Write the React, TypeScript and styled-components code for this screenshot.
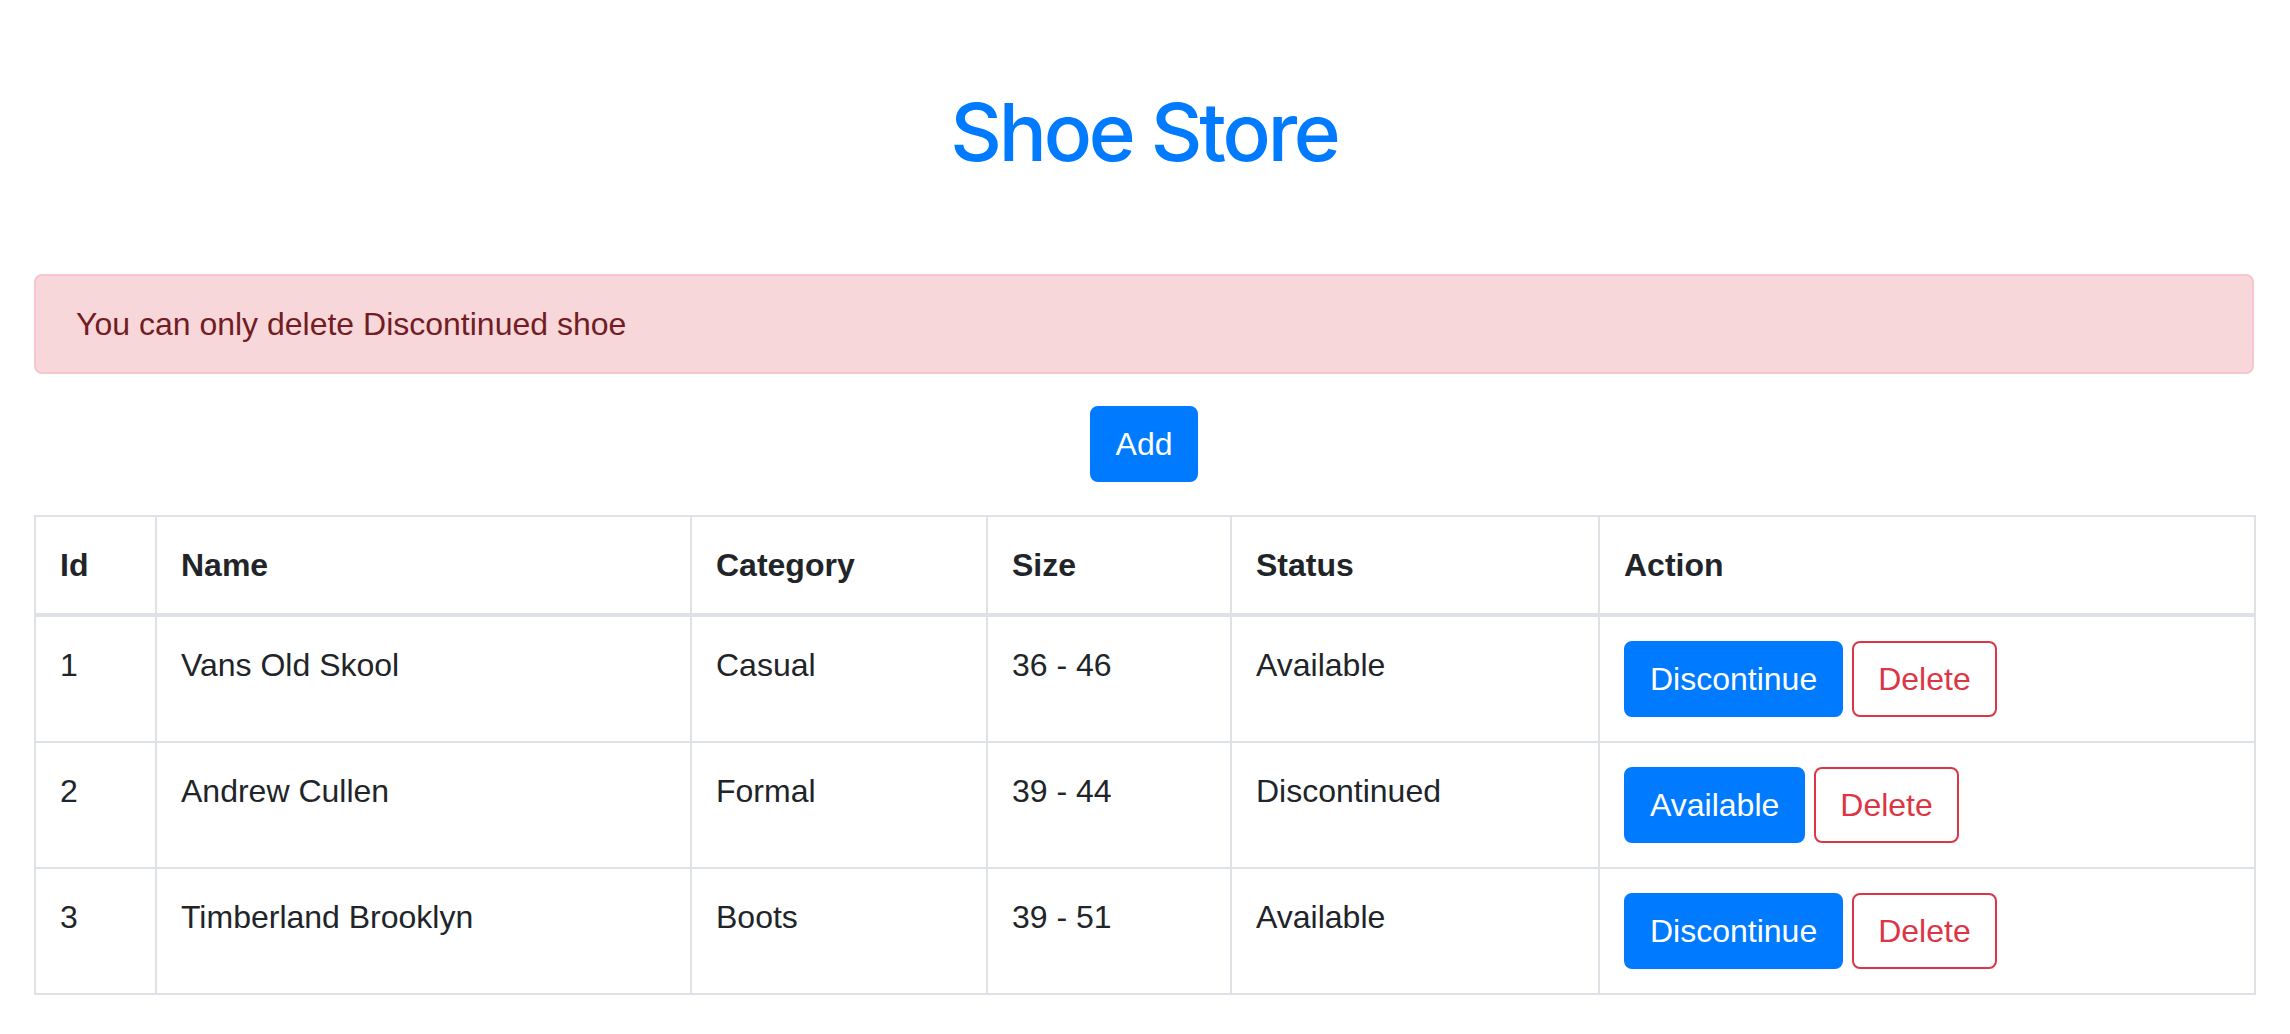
import React, { useState } from "react";
import styled, { createGlobalStyle } from "styled-components";

const GlobalStyle = createGlobalStyle`
  html, body {
    margin: 0;
    padding: 0;
    background: #ffffff;
  }
  body {
    font-family: "Liberation Sans", Arial, sans-serif;
    font-size: 32px;
    line-height: 48px;
    color: #212529;
  }
  * { box-sizing: border-box; }
`;

const Page = styled.div`
  padding: 84px 36px 0 34px;
`;

const Title = styled.h1`
  margin: 0 0 94px 0;
  text-align: center;
  font-family: "Inter", "Liberation Sans", sans-serif;
  font-weight: 500;
  font-size: 80px;
  line-height: 96px;
  letter-spacing: -3.2px;
  color: #007bff;
`;

const Alert = styled.div`
  background: #f8d7da;
  border: 2px solid #f5c6cb;
  border-radius: 8px;
  color: #721c24;
  padding: 24px 40px;
  margin-bottom: 32px;
`;

const Toolbar = styled.div`
  display: flex;
  justify-content: center;
  margin-bottom: 33px;
`;

const Button = styled.button<{ $variant: "primary" | "danger" }>`
  font-family: "Liberation Sans", Arial, sans-serif;
  font-size: 32px;
  line-height: 48px;
  padding: 12px 24px;
  border-radius: 8px;
  border: 2px solid ${(p) => (p.$variant === "primary" ? "#007bff" : "#dc3545")};
  background: ${(p) => (p.$variant === "primary" ? "#007bff" : "transparent")};
  color: ${(p) => (p.$variant === "primary" ? "#ffffff" : "#dc3545")};
  cursor: pointer;
`;

const Table = styled.table`
  width: 100%;
  table-layout: fixed;
  border-collapse: collapse;
  border: 2px solid #dee2e6;
`;

const HeadCell = styled.th`
  text-align: left;
  font-weight: bold;
  padding: 24px;
  border: 2px solid #dee2e6;
  border-bottom-width: 4px;
  vertical-align: bottom;
`;

const Cell = styled.td`
  padding: 24px;
  border: 2px solid #dee2e6;
  vertical-align: top;
`;

const Actions = styled.div`
  display: flex;
  gap: 9px;
`;

type Shoe = {
  id: number;
  name: string;
  category: string;
  size: string;
  status: "Available" | "Discontinued";
};

const initial: Shoe[] = [
  { id: 1, name: "Vans Old Skool", category: "Casual", size: "36 - 46", status: "Available" },
  { id: 2, name: "Andrew Cullen", category: "Formal", size: "39 - 44", status: "Discontinued" },
  { id: 3, name: "Timberland Brooklyn", category: "Boots", size: "39 - 51", status: "Available" },
];

const widths = [121, 535, 296, 244, 368, 656];

export default function App() {
  const [shoes, setShoes] = useState<Shoe[]>(initial);

  const toggle = (id: number) =>
    setShoes((s) =>
      s.map((x) =>
        x.id === id
          ? { ...x, status: x.status === "Available" ? "Discontinued" : "Available" }
          : x
      )
    );

  return (
    <>
      <GlobalStyle />
      <Page>
        <Title>Shoe Store</Title>
        <Alert>You can only delete Discontinued shoe</Alert>
        <Toolbar>
          <Button $variant="primary">Add</Button>
        </Toolbar>
        <Table>
          <colgroup>
            {widths.map((w, i) => (
              <col key={i} style={{ width: w }} />
            ))}
          </colgroup>
          <thead>
            <tr>
              <HeadCell>Id</HeadCell>
              <HeadCell>Name</HeadCell>
              <HeadCell>Category</HeadCell>
              <HeadCell>Size</HeadCell>
              <HeadCell>Status</HeadCell>
              <HeadCell>Action</HeadCell>
            </tr>
          </thead>
          <tbody>
            {shoes.map((s) => (
              <tr key={s.id}>
                <Cell>{s.id}</Cell>
                <Cell>{s.name}</Cell>
                <Cell>{s.category}</Cell>
                <Cell>{s.size}</Cell>
                <Cell>{s.status}</Cell>
                <Cell>
                  <Actions>
                    <Button $variant="primary" onClick={() => toggle(s.id)}>
                      {s.status === "Available" ? "Discontinue" : "Available"}
                    </Button>
                    <Button $variant="danger">Delete</Button>
                  </Actions>
                </Cell>
              </tr>
            ))}
          </tbody>
        </Table>
      </Page>
    </>
  );
}
